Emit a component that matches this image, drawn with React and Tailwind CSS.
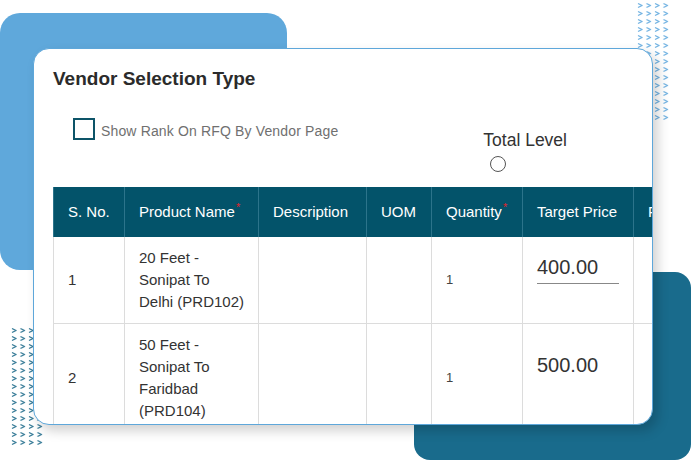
import React from 'react'

// chevron dot field, drawn once as an svg pattern
function Chevrons({ id, color, cols, rows, className }) {
  const w = cols * 8.5
  const h = rows * 8
  return (
    <svg className={className} width={w} height={h} viewBox={`0 0 ${w} ${h}`}>
      <defs>
        <pattern id={id} width="8.5" height="8" patternUnits="userSpaceOnUse">
          <path d="M1 1.5 L5 3.5 L1 5.5" fill="none" stroke={color} strokeWidth="1.3" strokeLinejoin="round" />
        </pattern>
      </defs>
      <rect width={w} height={h} fill={`url(#${id})`} />
    </svg>
  )
}

const COLS = [
  { label: 'S. No.', w: 71 },
  { label: 'Product Name', w: 134, req: true },
  { label: 'Description', w: 108 },
  { label: 'UOM', w: 65 },
  { label: 'Quantity', w: 91, req: true },
  { label: 'Target Price', w: 111 },
  { label: 'Final Price', w: 110 },
]

const ROWS = [
  { no: '1', product: ['20 Feet -', 'Sonipat To', 'Delhi (PRD102)'], qty: '1', price: '400.00', active: true },
  { no: '2', product: ['50 Feet -', 'Sonipat To', 'Faridbad', '(PRD104)'], qty: '1', price: '500.00' },
]

export default function App() {
  return (
    <div className="relative w-[692px] h-[461px] overflow-hidden bg-white font-['Liberation_Sans',Arial,sans-serif]">
      {/* background shapes */}
      <div className="absolute left-0 top-[13px] w-[287px] h-[257px] rounded-[20px] bg-[#5fa8db]" />
      <div className="absolute left-[414px] top-[272px] w-[277px] h-[188px] rounded-[16px] bg-[#196b8c]" />
      <Chevrons id="dotsA" color="#6aaee0" cols={4} rows={15} className="absolute left-[637px] top-[2px]" />
      <Chevrons id="dotsB" color="#2a7391" cols={4} rows={15} className="absolute left-[11px] top-[327px]" />

      {/* card */}
      <div className="absolute left-[33px] top-[48px] w-[620px] h-[377px] rounded-[16px] border border-[#5ea7da] bg-white overflow-hidden shadow-[5px_6px_12px_rgba(0,0,0,0.18)]">
        <div className="pl-[19px] pt-[19px]">
          <h2 className="text-[19px] leading-[21px] font-bold text-[#2b2b2b]">Vendor Selection Type</h2>

          <div className="flex items-start mt-[29px]">
            <label className="flex items-center ml-[20px]">
              <span className="w-[22px] h-[22px] border-[2.5px] border-[#0d5468] bg-white" />
              <span className="ml-[6px] mt-[3px] text-[14px] leading-[18px] text-[#707070] tracking-[0.15px]">
                Show Rank On RFQ By Vendor Page
              </span>
            </label>
            <div className="flex flex-col items-start ml-[145px] mt-[12px]">
              <span className="text-[17.5px] leading-[20px] text-[#333]">Total Level</span>
              <span className="mt-[6px] ml-[7px] w-[16px] h-[16px] rounded-full border border-[#555]" />
            </div>
          </div>

          <table className="mt-[15px] table-fixed border-collapse" style={{ width: COLS.reduce((s, c) => s + c.w, 0) }}>
            <colgroup>
              {COLS.map(c => <col key={c.label} style={{ width: c.w }} />)}
            </colgroup>
            <thead>
              <tr className="h-[50px] bg-[#03536a]">
                {COLS.map(c => (
                  <th key={c.label} className="border-x border-[#2c748b] pl-[14px] pr-[4px] text-left font-normal text-[15px] text-white whitespace-nowrap">
                    {c.label}
                    {c.req && <sup className="text-[#e0242c] text-[11px] ml-[1px]">*</sup>}
                  </th>
                ))}
              </tr>
            </thead>
            <tbody className="text-[#333]">
              {ROWS.map(r => (
                <tr key={r.no} className="border-b border-[#dcdcdc]">
                  <td className="border-x border-[#dcdcdc] px-[14px] text-[15px]">{r.no}</td>
                  <td className="border-x border-[#dcdcdc] pl-[14px] pr-[4px] py-[10px] text-[15px] leading-[22px]">
                    {r.product.map(l => <div key={l} className="whitespace-nowrap">{l}</div>)}
                  </td>
                  <td className="border-x border-[#dcdcdc]" />
                  <td className="border-x border-[#dcdcdc]" />
                  <td className="border-x border-[#dcdcdc] px-[14px] text-[13px] text-[#444]">{r.qty}</td>
                  <td className="border-x border-[#dcdcdc] px-[14px]">
                    <div className={`h-[33px] flex items-center text-[20px] ${r.active ? 'border-b border-[#888]' : ''}`}>
                      {r.price}
                    </div>
                    <div className="h-[26px]" />
                  </td>
                  <td className="border-x border-[#dcdcdc]" />
                </tr>
              ))}
            </tbody>
          </table>
        </div>
      </div>
    </div>
  )
}
